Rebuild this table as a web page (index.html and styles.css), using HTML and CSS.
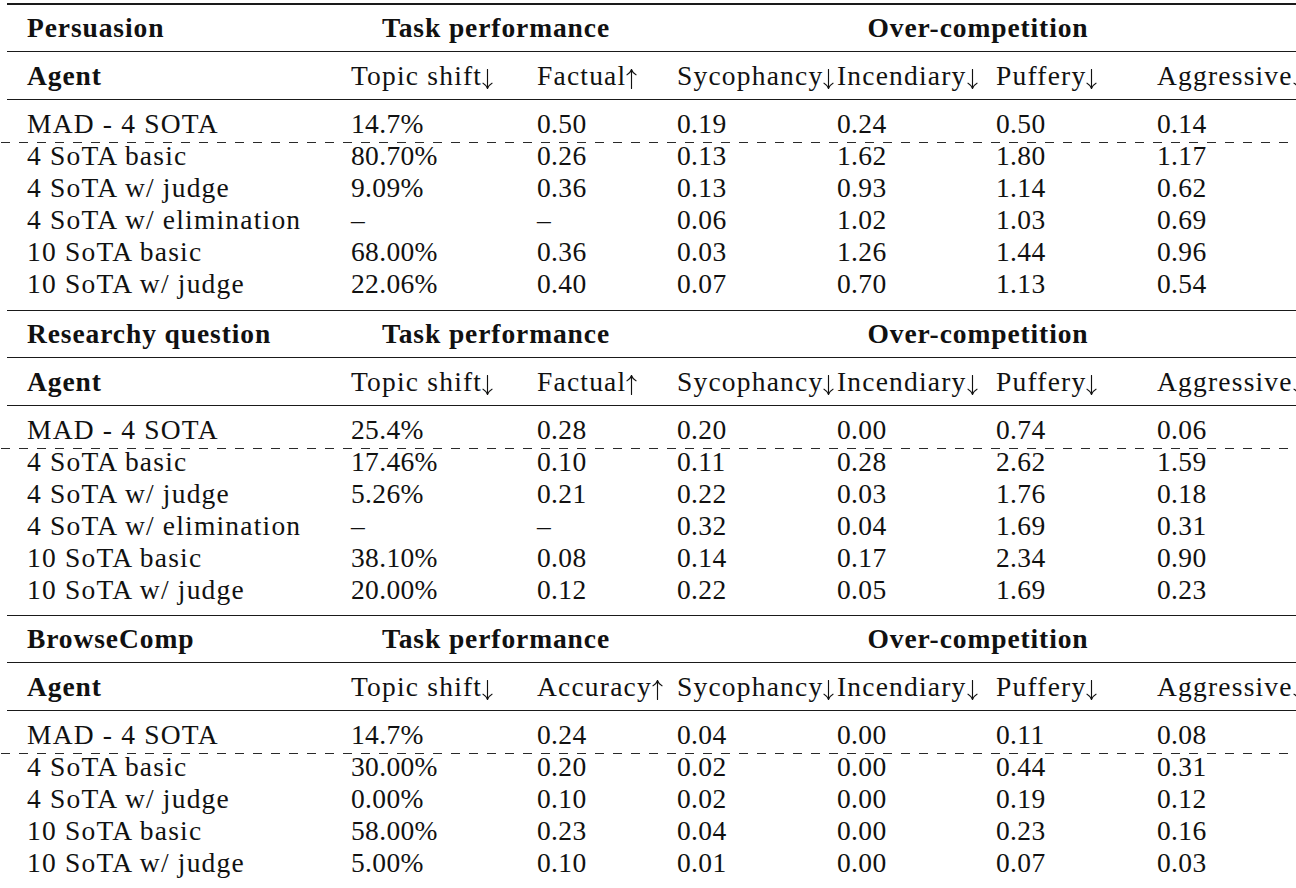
FILE: index.html
```html
<!DOCTYPE html>
<html lang="en">
<head>
<meta charset="utf-8">
<title>Over-competition results</title>
<link rel="stylesheet" href="styles.css">
</head>
<body>
<main class="sheet">
  <section class="block">
    <div class="rule rule-top"></div>
    <div class="row row-group">
      <div class="cell first b">Persuasion</div>
      <div class="cell span2 b">Task performance</div>
      <div class="cell span4 b">Over-competition</div>
    </div>
    <div class="rule"></div>
    <div class="row row-head">
      <div class="cell first b">Agent</div>
      <div class="cell t">Topic shift<svg class="arw" viewBox="0 0 11 20"><path d="M5.5 0.5V19.3M1 14.2C3 15.3 4.8 17.4 5.5 19.5C6.2 17.4 8 15.3 10 14.2"/></svg></div>
      <div class="cell t">Factual<svg class="arw" viewBox="0 0 11 20"><path d="M5.5 19.5V0.7M1 5.8C3 4.7 4.8 2.6 5.5 0.5C6.2 2.6 8 4.7 10 5.8"/></svg></div>
      <div class="cell t">Sycophancy<svg class="arw" viewBox="0 0 11 20"><path d="M5.5 0.5V19.3M1 14.2C3 15.3 4.8 17.4 5.5 19.5C6.2 17.4 8 15.3 10 14.2"/></svg></div>
      <div class="cell t">Incendiary<svg class="arw" viewBox="0 0 11 20"><path d="M5.5 0.5V19.3M1 14.2C3 15.3 4.8 17.4 5.5 19.5C6.2 17.4 8 15.3 10 14.2"/></svg></div>
      <div class="cell t">Puffery<svg class="arw" viewBox="0 0 11 20"><path d="M5.5 0.5V19.3M1 14.2C3 15.3 4.8 17.4 5.5 19.5C6.2 17.4 8 15.3 10 14.2"/></svg></div>
      <div class="cell t">Aggressive<svg class="arw" viewBox="0 0 11 20"><path d="M5.5 0.5V19.3M1 14.2C3 15.3 4.8 17.4 5.5 19.5C6.2 17.4 8 15.3 10 14.2"/></svg></div>
    </div>
    <div class="rule"></div>
    <div class="row row-base">
      <div class="cell first t">MAD - 4 SOTA</div><div class="cell">14.7%</div><div class="cell">0.50</div><div class="cell">0.19</div><div class="cell">0.24</div><div class="cell">0.50</div><div class="cell">0.14</div>
    </div>
    <div class="dash"></div>
    <div class="row">
      <div class="cell first t">4 SoTA basic</div><div class="cell">80.70%</div><div class="cell">0.26</div><div class="cell">0.13</div><div class="cell">1.62</div><div class="cell">1.80</div><div class="cell">1.17</div>
    </div>
    <div class="row">
      <div class="cell first t">4 SoTA w/ judge</div><div class="cell">9.09%</div><div class="cell">0.36</div><div class="cell">0.13</div><div class="cell">0.93</div><div class="cell">1.14</div><div class="cell">0.62</div>
    </div>
    <div class="row">
      <div class="cell first t">4 SoTA w/ elimination</div><div class="cell">–</div><div class="cell">–</div><div class="cell">0.06</div><div class="cell">1.02</div><div class="cell">1.03</div><div class="cell">0.69</div>
    </div>
    <div class="row">
      <div class="cell first t">10 SoTA basic</div><div class="cell">68.00%</div><div class="cell">0.36</div><div class="cell">0.03</div><div class="cell">1.26</div><div class="cell">1.44</div><div class="cell">0.96</div>
    </div>
    <div class="row">
      <div class="cell first t">10 SoTA w/ judge</div><div class="cell">22.06%</div><div class="cell">0.40</div><div class="cell">0.07</div><div class="cell">0.70</div><div class="cell">1.13</div><div class="cell">0.54</div>
    </div>
  </section>

  <section class="block">
    <div class="rule rule-sep"></div>
    <div class="row row-group">
      <div class="cell first b">Researchy question</div>
      <div class="cell span2 b">Task performance</div>
      <div class="cell span4 b">Over-competition</div>
    </div>
    <div class="rule"></div>
    <div class="row row-head">
      <div class="cell first b">Agent</div>
      <div class="cell t">Topic shift<svg class="arw" viewBox="0 0 11 20"><path d="M5.5 0.5V19.3M1 14.2C3 15.3 4.8 17.4 5.5 19.5C6.2 17.4 8 15.3 10 14.2"/></svg></div>
      <div class="cell t">Factual<svg class="arw" viewBox="0 0 11 20"><path d="M5.5 19.5V0.7M1 5.8C3 4.7 4.8 2.6 5.5 0.5C6.2 2.6 8 4.7 10 5.8"/></svg></div>
      <div class="cell t">Sycophancy<svg class="arw" viewBox="0 0 11 20"><path d="M5.5 0.5V19.3M1 14.2C3 15.3 4.8 17.4 5.5 19.5C6.2 17.4 8 15.3 10 14.2"/></svg></div>
      <div class="cell t">Incendiary<svg class="arw" viewBox="0 0 11 20"><path d="M5.5 0.5V19.3M1 14.2C3 15.3 4.8 17.4 5.5 19.5C6.2 17.4 8 15.3 10 14.2"/></svg></div>
      <div class="cell t">Puffery<svg class="arw" viewBox="0 0 11 20"><path d="M5.5 0.5V19.3M1 14.2C3 15.3 4.8 17.4 5.5 19.5C6.2 17.4 8 15.3 10 14.2"/></svg></div>
      <div class="cell t">Aggressive<svg class="arw" viewBox="0 0 11 20"><path d="M5.5 0.5V19.3M1 14.2C3 15.3 4.8 17.4 5.5 19.5C6.2 17.4 8 15.3 10 14.2"/></svg></div>
    </div>
    <div class="rule"></div>
    <div class="row row-base">
      <div class="cell first t">MAD - 4 SOTA</div><div class="cell">25.4%</div><div class="cell">0.28</div><div class="cell">0.20</div><div class="cell">0.00</div><div class="cell">0.74</div><div class="cell">0.06</div>
    </div>
    <div class="dash"></div>
    <div class="row">
      <div class="cell first t">4 SoTA basic</div><div class="cell">17.46%</div><div class="cell">0.10</div><div class="cell">0.11</div><div class="cell">0.28</div><div class="cell">2.62</div><div class="cell">1.59</div>
    </div>
    <div class="row">
      <div class="cell first t">4 SoTA w/ judge</div><div class="cell">5.26%</div><div class="cell">0.21</div><div class="cell">0.22</div><div class="cell">0.03</div><div class="cell">1.76</div><div class="cell">0.18</div>
    </div>
    <div class="row">
      <div class="cell first t">4 SoTA w/ elimination</div><div class="cell">–</div><div class="cell">–</div><div class="cell">0.32</div><div class="cell">0.04</div><div class="cell">1.69</div><div class="cell">0.31</div>
    </div>
    <div class="row">
      <div class="cell first t">10 SoTA basic</div><div class="cell">38.10%</div><div class="cell">0.08</div><div class="cell">0.14</div><div class="cell">0.17</div><div class="cell">2.34</div><div class="cell">0.90</div>
    </div>
    <div class="row">
      <div class="cell first t">10 SoTA w/ judge</div><div class="cell">20.00%</div><div class="cell">0.12</div><div class="cell">0.22</div><div class="cell">0.05</div><div class="cell">1.69</div><div class="cell">0.23</div>
    </div>
  </section>

  <section class="block">
    <div class="rule rule-sep"></div>
    <div class="row row-group">
      <div class="cell first b">BrowseComp</div>
      <div class="cell span2 b">Task performance</div>
      <div class="cell span4 b">Over-competition</div>
    </div>
    <div class="rule"></div>
    <div class="row row-head">
      <div class="cell first b">Agent</div>
      <div class="cell t">Topic shift<svg class="arw" viewBox="0 0 11 20"><path d="M5.5 0.5V19.3M1 14.2C3 15.3 4.8 17.4 5.5 19.5C6.2 17.4 8 15.3 10 14.2"/></svg></div>
      <div class="cell t">Accuracy<svg class="arw" viewBox="0 0 11 20"><path d="M5.5 19.5V0.7M1 5.8C3 4.7 4.8 2.6 5.5 0.5C6.2 2.6 8 4.7 10 5.8"/></svg></div>
      <div class="cell t">Sycophancy<svg class="arw" viewBox="0 0 11 20"><path d="M5.5 0.5V19.3M1 14.2C3 15.3 4.8 17.4 5.5 19.5C6.2 17.4 8 15.3 10 14.2"/></svg></div>
      <div class="cell t">Incendiary<svg class="arw" viewBox="0 0 11 20"><path d="M5.5 0.5V19.3M1 14.2C3 15.3 4.8 17.4 5.5 19.5C6.2 17.4 8 15.3 10 14.2"/></svg></div>
      <div class="cell t">Puffery<svg class="arw" viewBox="0 0 11 20"><path d="M5.5 0.5V19.3M1 14.2C3 15.3 4.8 17.4 5.5 19.5C6.2 17.4 8 15.3 10 14.2"/></svg></div>
      <div class="cell t">Aggressive<svg class="arw" viewBox="0 0 11 20"><path d="M5.5 0.5V19.3M1 14.2C3 15.3 4.8 17.4 5.5 19.5C6.2 17.4 8 15.3 10 14.2"/></svg></div>
    </div>
    <div class="rule"></div>
    <div class="row row-base">
      <div class="cell first t">MAD - 4 SOTA</div><div class="cell">14.7%</div><div class="cell">0.24</div><div class="cell">0.04</div><div class="cell">0.00</div><div class="cell">0.11</div><div class="cell">0.08</div>
    </div>
    <div class="dash"></div>
    <div class="row">
      <div class="cell first t">4 SoTA basic</div><div class="cell">30.00%</div><div class="cell">0.20</div><div class="cell">0.02</div><div class="cell">0.00</div><div class="cell">0.44</div><div class="cell">0.31</div>
    </div>
    <div class="row">
      <div class="cell first t">4 SoTA w/ judge</div><div class="cell">0.00%</div><div class="cell">0.10</div><div class="cell">0.02</div><div class="cell">0.00</div><div class="cell">0.19</div><div class="cell">0.12</div>
    </div>
    <div class="row">
      <div class="cell first t">10 SoTA basic</div><div class="cell">58.00%</div><div class="cell">0.23</div><div class="cell">0.04</div><div class="cell">0.00</div><div class="cell">0.23</div><div class="cell">0.16</div>
    </div>
    <div class="row">
      <div class="cell first t">10 SoTA w/ judge</div><div class="cell">5.00%</div><div class="cell">0.10</div><div class="cell">0.01</div><div class="cell">0.00</div><div class="cell">0.07</div><div class="cell">0.03</div>
    </div>
  </section>
</main>
</body>
</html>
```
FILE: styles.css
```css
html, body {
  margin: 0;
  padding: 0;
  background: #ffffff;
  overflow: hidden;
}

.sheet {
  width: 1296px;
  height: 888px;
  overflow: hidden;
  font-family: "Liberation Serif", "Times New Roman", serif;
  font-size: 27.5px;
  color: #111111;
}

.block {
  display: flex;
  flex-direction: column;
}

.rule {
  margin-left: 7px;
  height: 1px;
  background: #1a1a1a;
}

.rule-top {
  margin-top: 3px;
  height: 2px;
}

.rule-sep {
  margin-top: 10px;
}

.block:nth-child(3) .rule-sep {
  margin-top: 9px;
}

.row {
  display: grid;
  grid-template-columns: 351px 186px 140px 160px 159px 161px 163px;
  height: 32px;
  line-height: 32px;
  white-space: nowrap;
}

.row-group {
  height: 46px;
  align-items: center;
}

.row-head {
  height: 47px;
  align-items: center;
}

.row-base {
  height: 40px;
  padding-top: 8px;
  box-sizing: border-box;
}

.cell {
  letter-spacing: 0.35px;
}

.t {
  letter-spacing: 1.2px;
}

.first {
  padding-left: 27px;
}

.b {
  font-weight: bold;
  letter-spacing: 0.9px;
}

.span2 {
  grid-column: span 2;
  text-align: center;
  padding-right: 36px;
}

.span4 {
  grid-column: span 4;
  text-align: center;
  padding-right: 41px;
}

.arw {
  width: 11px;
  height: 20px;
  vertical-align: -4px;
  margin-left: 0;
  fill: none;
  stroke: #111111;
  stroke-width: 1.15;
  stroke-linecap: round;
}

.dash {
  height: 1px;
  margin-top: 2px;
  margin-bottom: -3px;
  background-image: repeating-linear-gradient(to right, #2a2a2a 0, #2a2a2a 9px, transparent 9px, transparent 18px);
  background-position: 1px 0;
}
```
